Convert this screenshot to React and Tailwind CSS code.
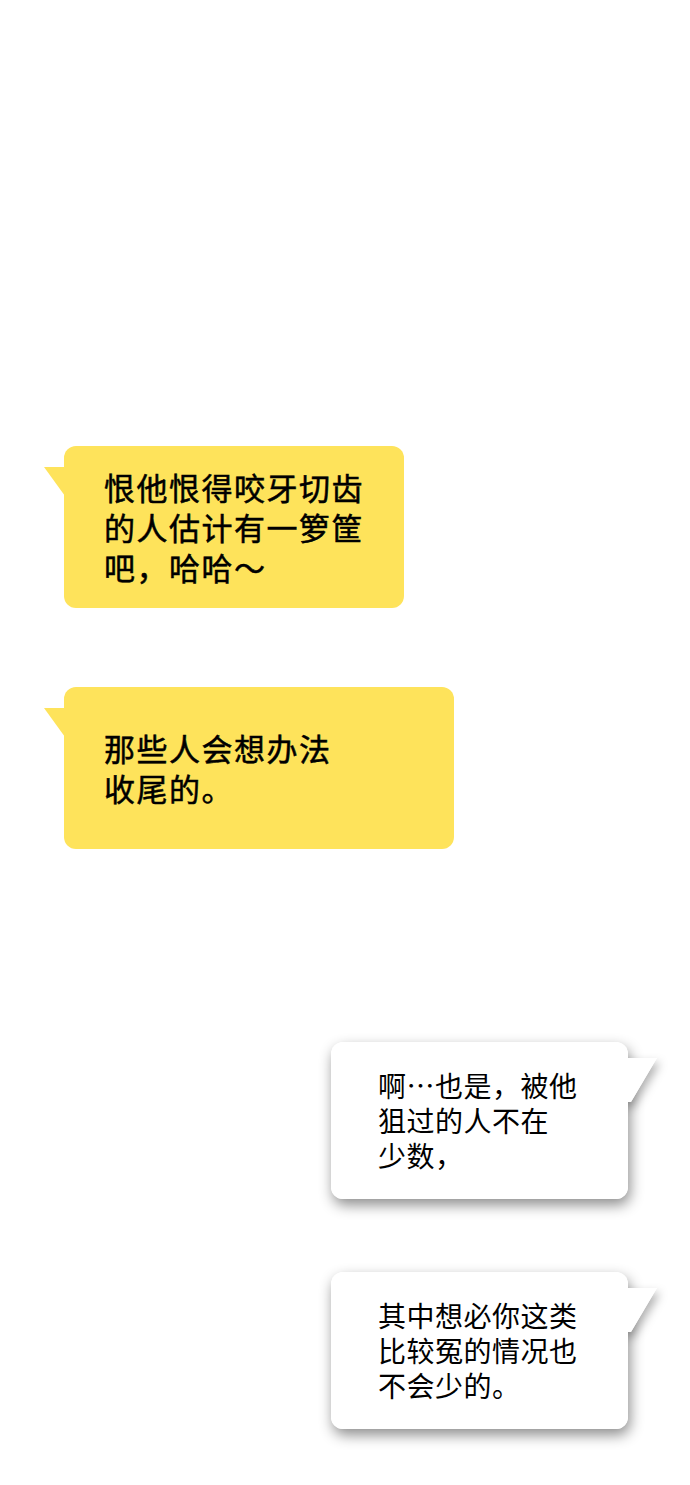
const FONT = '"Noto Sans CJK SC", "Noto Sans", sans-serif'

function YellowBubble({ width, lines }) {
  return (
    <div className="relative ml-[64px] h-[162px] rounded-[12px] bg-[#fee35b]" style={{ width }}>
      <svg className="absolute left-[-20px] top-[21px]" width="21" height="29" viewBox="0 0 21 29">
        <polygon points="0,0 21,0 21,29" fill="#fee35b" />
      </svg>
      <div className="flex h-full flex-col justify-center pl-[40px] text-[31px] font-normal leading-[40px] tracking-[1.5px] text-black [-webkit-text-stroke:0.5px_black]">
        {lines.map((l) => (
          <div key={l}>{l}</div>
        ))}
      </div>
    </div>
  )
}

function WhiteBubble({ lines }) {
  return (
    <div className="relative ml-[331px] h-[157px] w-[297px]">
      <div className="absolute inset-0 rounded-[12px] shadow-[2px_6px_14px_rgba(0,0,0,0.45)]" />
      <svg className="absolute left-[290px] top-[14px]" width="38" height="48" viewBox="0 0 38 48" style={{ filter: 'drop-shadow(3px 5px 5px rgba(0,0,0,0.3))' }}>
        <polygon points="0,2 36,2 10,46 0,46" fill="#ffffff" />
      </svg>
      <div className="absolute inset-0 rounded-[12px] bg-white" />
      <svg className="absolute left-[290px] top-[14px]" width="38" height="48" viewBox="0 0 38 48">
        <polygon points="0,2 36,2 10,46 0,46" fill="#ffffff" />
      </svg>
      <div className="relative flex h-full flex-col justify-center pl-[47px] text-[28px] leading-[35px] tracking-[0.5px] text-black">
        {lines.map((l) => (
          <div key={l}>{l}</div>
        ))}
      </div>
    </div>
  )
}

export default function App() {
  return (
    <div className="min-h-[1485px] w-[690px] bg-white pt-[446px]" style={{ fontFamily: FONT }}>
      <YellowBubble width={340} lines={['恨他恨得咬牙切齿', '的人估计有一箩筐', '吧，哈哈～']} />
      <div className="mt-[79px]">
        <YellowBubble width={390} lines={['那些人会想办法', '收尾的。']} />
      </div>
      <div className="mt-[193px]">
        <WhiteBubble lines={['啊…也是，被他', '狙过的人不在', '少数，']} />
      </div>
      <div className="mt-[73px]">
        <WhiteBubble lines={['其中想必你这类', '比较冤的情况也', '不会少的。']} />
      </div>
    </div>
  )
}
